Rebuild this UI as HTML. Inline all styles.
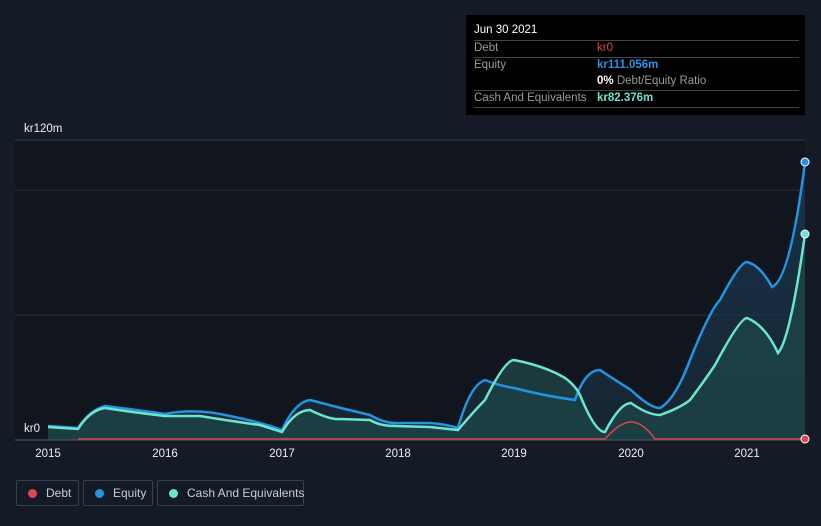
<!DOCTYPE html>
<html><head><style>
html,body{margin:0;width:821px;height:526px;overflow:hidden}
body{background:#151b26;font-family:"Liberation Sans",sans-serif;position:relative}
.tt{position:absolute;left:466px;top:15px;width:339px;height:100px;background:#000;color:#fff;font-size:11.5px}
.tt .r{position:absolute;left:8px;right:6px;border-top:1px solid #444}
.lab{color:#999}
.leg{position:absolute;top:480px;height:26px;border:1px solid #3a404b;border-radius:2px;color:#ccc;font-size:12px;line-height:25px;box-sizing:border-box;white-space:nowrap}
.leg i{display:inline-block;width:9px;height:9px;border-radius:50%;margin:0 9px 0 11px;vertical-align:-1px}
</style></head><body>
<svg width="821" height="526" style="position:absolute;left:0;top:0">
<defs><linearGradient id="g" x1="0" y1="0" x2="0" y2="1"><stop offset="0" stop-color="#1e3e5e" stop-opacity=".7"/><stop offset="1" stop-color="#1a3040" stop-opacity=".6"/></linearGradient></defs>
<rect x="15" y="140" width="790" height="300" fill="#10151e"/>
<line x1="15" y1="140" x2="805" y2="140" stroke="#333a45"/>
<line x1="15" y1="190" x2="805" y2="190" stroke="#2a303a"/>
<line x1="15" y1="315" x2="805" y2="315" stroke="#2a303a"/>
<path d="M48,426 L78,428 Q90,410 105,406 Q130,409 165,414 Q195,408 230,416 Q260,422 282,430 Q295,402 310,400 Q340,408 370,415 Q385,424 400,423 L430,423 Q445,424 458,428 Q470,385 485,380 Q500,386 514,388 Q545,396 575,400 Q585,370 600,370 Q615,380 631,390 Q650,408 660,408 Q675,400 690,360 Q710,310 720,300 Q740,262 747,262 Q760,265 772,287 Q790,280 805,162 L805,440 L48,440Z" fill="url(#g)"/>
<path d="M48,427 L78,429 Q90,410 105,408 Q130,412 165,416 L200,416 Q230,421 260,425 L282,432 Q295,410 310,410 Q330,420 340,419 L370,420 Q380,426 395,426 L430,427 L458,430 Q475,410 485,400 Q505,360 514,360 Q545,366 565,378 Q575,385 580,395 Q595,432 605,432 Q620,403 631,403 Q648,415 660,415 Q680,408 690,400 Q705,380 715,365 Q740,318 747,318 Q765,325 778,353 Q790,340 805,234 L805,440 L48,440Z" fill="#1d4748" fill-opacity=".75"/>
<path d="M48,426 L78,428 Q90,410 105,406 Q130,409 165,414 Q195,408 230,416 Q260,422 282,430 Q295,402 310,400 Q340,408 370,415 Q385,424 400,423 L430,423 Q445,424 458,428 Q470,385 485,380 Q500,386 514,388 Q545,396 575,400 Q585,370 600,370 Q615,380 631,390 Q650,408 660,408 Q675,400 690,360 Q710,310 720,300 Q740,262 747,262 Q760,265 772,287 Q790,280 805,162" fill="none" stroke="#2394df" stroke-width="2.5"/>
<path d="M48,427 L78,429 Q90,410 105,408 Q130,412 165,416 L200,416 Q230,421 260,425 L282,432 Q295,410 310,410 Q330,420 340,419 L370,420 Q380,426 395,426 L430,427 L458,430 Q475,410 485,400 Q505,360 514,360 Q545,366 565,378 Q575,385 580,395 Q595,432 605,432 Q620,403 631,403 Q648,415 660,415 Q680,408 690,400 Q705,380 715,365 Q740,318 747,318 Q765,325 778,353 Q790,340 805,234" fill="none" stroke="#6ce5cf" stroke-width="2.5"/>
<path d="M78,439 L605,439 Q620,422 631,422 Q643,422 655,439 L805,439" fill="none" stroke="#e0454e" stroke-width="1.5"/>
<line x1="15" y1="440" x2="805" y2="440" stroke="#555b66"/>
<circle cx="805" cy="162" r="4" fill="#2394df" stroke="#fff" stroke-width="1"/>
<circle cx="805" cy="234" r="4" fill="#6ce5cf" stroke="#fff" stroke-width="1"/>
<circle cx="805" cy="439" r="4" fill="#e0454e" stroke="#fff" stroke-width="1"/>
<g fill="#eee" font-size="11.5" font-family="Liberation Sans,sans-serif">
<text x="24" y="132">kr120m</text><text x="24" y="432">kr0</text>
<text x="48" y="457" text-anchor="middle">2015</text><text x="165" y="457" text-anchor="middle">2016</text><text x="282" y="457" text-anchor="middle">2017</text><text x="398" y="457" text-anchor="middle">2018</text><text x="514" y="457" text-anchor="middle">2019</text><text x="631" y="457" text-anchor="middle">2020</text><text x="747" y="457" text-anchor="middle">2021</text>
</g>
</svg>
<div class="tt">
<div style="position:absolute;left:8px;top:9px">Jun 30 2021</div>
<div class="r" style="top:25px"></div>
<div class="lab" style="position:absolute;left:8px;top:27px">Debt</div><div style="position:absolute;left:131px;top:27px;color:#e0454e">kr0</div>
<div class="r" style="top:42px"></div>
<div class="lab" style="position:absolute;left:8px;top:44px">Equity</div><div style="position:absolute;left:131px;top:44px;color:#2394df;font-weight:bold">kr111.056m</div>
<div style="position:absolute;left:131px;top:60px"><b>0%</b> <span class="lab">Debt/Equity Ratio</span></div>
<div class="r" style="top:75px"></div>
<div class="lab" style="position:absolute;left:8px;top:77px">Cash And Equivalents</div><div style="position:absolute;left:131px;top:77px;color:#6ce5cf;font-weight:bold">kr82.376m</div>
<div class="r" style="top:92px"></div>
</div>
<div class="leg" style="left:16px;width:63px"><i style="background:#e0454e"></i>Debt</div>
<div class="leg" style="left:83px;width:70px"><i style="background:#2394df"></i>Equity</div>
<div class="leg" style="left:157px;width:147px"><i style="background:#6ce5cf"></i>Cash And Equivalents</div>
</body></html>
